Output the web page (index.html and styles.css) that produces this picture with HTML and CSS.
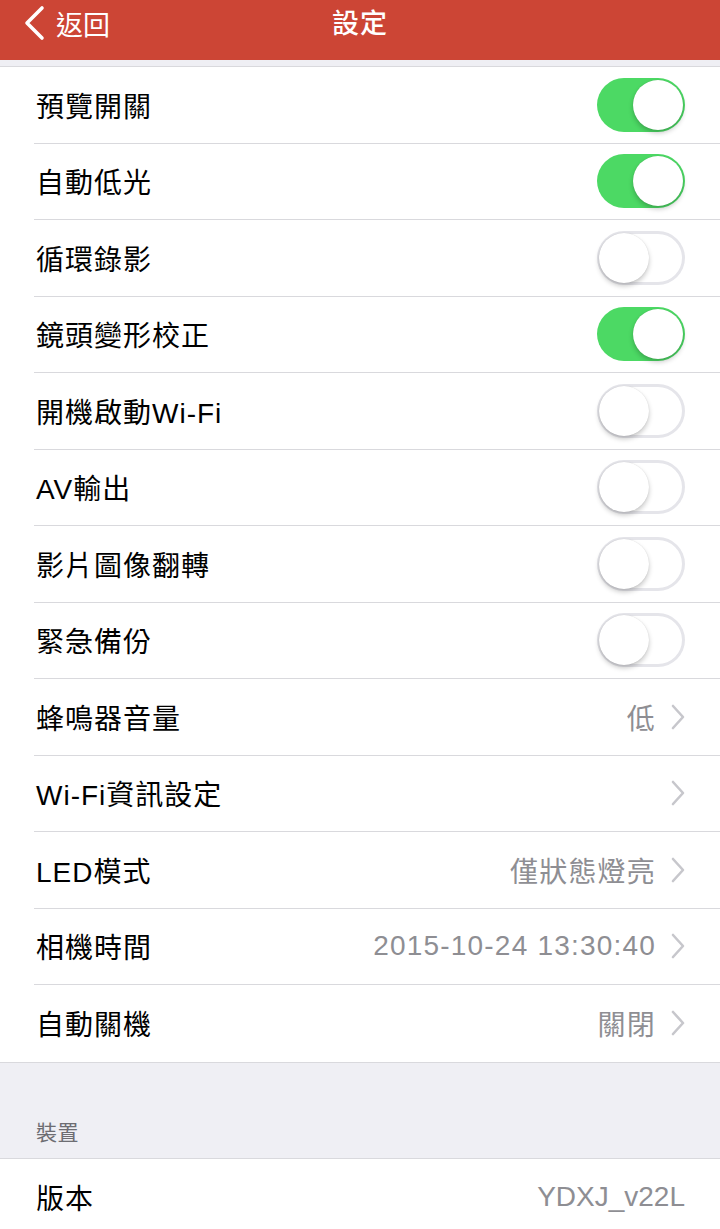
FILE: index.html
```html
<!DOCTYPE html>
<html lang="zh-Hant">
<head>
<meta charset="utf-8">
<title>設定</title>
<link rel="stylesheet" href="styles.css">
</head>
<body>
<header class="nav">
  <div class="back">
    <svg class="back-icon" width="24" height="36" viewBox="0 0 24 36"><path d="M20 3 L5 18 L20 33" fill="none" stroke="#fff" stroke-width="3.6" stroke-linecap="round" stroke-linejoin="round"/></svg>
    <span>返回</span>
  </div>
  <div class="title">設定</div>
</header>
<div class="gap-top"></div>
<ul class="list">
  <li class="row"><span class="label">預覽開關</span><span class="switch on"><i></i></span></li>
  <li class="row"><span class="label">自動低光</span><span class="switch on"><i></i></span></li>
  <li class="row"><span class="label">循環錄影</span><span class="switch"><i></i></span></li>
  <li class="row"><span class="label">鏡頭變形校正</span><span class="switch on"><i></i></span></li>
  <li class="row"><span class="label">開機啟動Wi-Fi</span><span class="switch"><i></i></span></li>
  <li class="row"><span class="label">AV輸出</span><span class="switch"><i></i></span></li>
  <li class="row"><span class="label">影片圖像翻轉</span><span class="switch"><i></i></span></li>
  <li class="row"><span class="label">緊急備份</span><span class="switch"><i></i></span></li>
  <li class="row"><span class="label">蜂鳴器音量</span><span class="detail">低<svg class="chev" width="14" height="26" viewBox="0 0 14 26"><path d="M2 2 L12 13 L2 24" fill="none" stroke="#c7c7cc" stroke-width="2.6" stroke-linecap="round" stroke-linejoin="round"/></svg></span></li>
  <li class="row"><span class="label">Wi-Fi資訊設定</span><span class="detail"><svg class="chev" width="14" height="26" viewBox="0 0 14 26"><path d="M2 2 L12 13 L2 24" fill="none" stroke="#c7c7cc" stroke-width="2.6" stroke-linecap="round" stroke-linejoin="round"/></svg></span></li>
  <li class="row"><span class="label">LED模式</span><span class="detail">僅狀態燈亮<svg class="chev" width="14" height="26" viewBox="0 0 14 26"><path d="M2 2 L12 13 L2 24" fill="none" stroke="#c7c7cc" stroke-width="2.6" stroke-linecap="round" stroke-linejoin="round"/></svg></span></li>
  <li class="row"><span class="label">相機時間</span><span class="detail">2015-10-24 13:30:40<svg class="chev" width="14" height="26" viewBox="0 0 14 26"><path d="M2 2 L12 13 L2 24" fill="none" stroke="#c7c7cc" stroke-width="2.6" stroke-linecap="round" stroke-linejoin="round"/></svg></span></li>
  <li class="row"><span class="label">自動關機</span><span class="detail">關閉<svg class="chev" width="14" height="26" viewBox="0 0 14 26"><path d="M2 2 L12 13 L2 24" fill="none" stroke="#c7c7cc" stroke-width="2.6" stroke-linecap="round" stroke-linejoin="round"/></svg></span></li>
</ul>
<div class="section-head">裝置</div>
<ul class="list">
  <li class="row"><span class="label">版本</span><span class="detail plain">YDXJ_v22L</span></li>
</ul>
</body>
</html>
```
FILE: styles.css
```css
* { box-sizing: border-box; }
html, body {
  margin: 0;
  padding: 0;
  background: #efeff4;
  font-family: "Liberation Sans", "Noto Sans CJK TC", sans-serif;
  color: #000;
}
.nav {
  height: 60px;
  background: #cc4535;
  color: #fff;
  display: flex;
  align-items: center;
  justify-content: center;
  position: relative;
}
.back {
  position: absolute;
  left: 22px;
  top: 5px;
  display: flex;
  align-items: center;
  gap: 10px;
  font-size: 27px;
  height: 36px;
}
.title {
  font-size: 27px;
  font-weight: 500;
  margin-top: -18px;
  letter-spacing: 1px;
}
.gap-top {
  height: 6px;
  background: #efeff4;
}
.list {
  list-style: none;
  margin: 0;
  padding: 0 0 0 34px;
  background: #fff;
  border-top: 1px solid #d9d9dd;
  border-bottom: 1px solid #d9d9dd;
}
.row {
  height: 76.5px;
  display: flex;
  align-items: center;
  justify-content: space-between;
  padding: 0 35px 0 2px;
  border-bottom: 1px solid #d9d9dd;
}
.row:last-child { border-bottom: none; }
.label {
  font-size: 28px;
  letter-spacing: 1px;
}
.detail {
  display: flex;
  align-items: center;
  gap: 15px;
  font-size: 28px;
  letter-spacing: 1.2px;
  color: #8e8e93;
}
.detail.plain { letter-spacing: 0; }
.chev { display: block; }
.switch {
  width: 88px;
  height: 54px;
  border-radius: 27px;
  background: #fff;
  box-shadow: inset 0 0 0 3px #e5e5ea;
  position: relative;
  flex: none;
}
.switch i {
  position: absolute;
  top: 2px;
  left: 2px;
  width: 50px;
  height: 50px;
  border-radius: 50%;
  background: #fff;
  box-shadow: 0 3px 5px rgba(0,0,0,0.22), 0 0 1px rgba(0,0,0,0.15);
}
.switch.on {
  background: #4cd964;
  box-shadow: none;
}
.switch.on i {
  left: 36px;
}
.section-head {
  height: 95px;
  padding: 0 0 12px 36px;
  display: flex;
  align-items: flex-end;
  font-size: 21px;
  letter-spacing: 0.5px;
  color: #6d6d72;
}
```
